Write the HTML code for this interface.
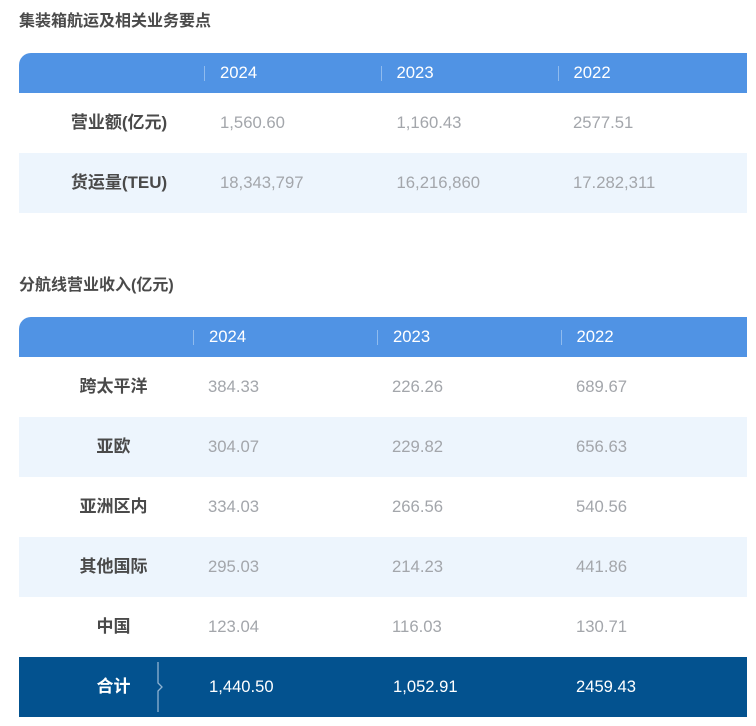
<!DOCTYPE html>
<html lang="zh">
<head>
<meta charset="utf-8">
<style>
html,body{margin:0;padding:0;background:#fff;width:756px;height:726px;overflow:hidden}
body{position:relative;font-family:"Liberation Sans","Noto Sans CJK SC",sans-serif}
.t,.h,.l,.v,.w,.s{position:absolute;white-space:nowrap}
.t{left:19px;font-size:16px;font-weight:bold;color:#4a4a4a;line-height:20px;margin-top:1px}
.bar{position:absolute;left:19px;width:728px}
.head{background:#5093e4;height:40px;border-radius:12px 0 0 0}
.alt{background:#edf5fd;height:60px}
.total{background:#03528f;height:60px}
.h{color:#fff;font-size:16.7px;line-height:20px;margin-top:1px}
.s{width:1px;height:15px;background:#8fbbee}
.l{font-size:17px;font-weight:bold;color:#4a4a4a;line-height:20px;text-align:center}
.v{font-size:16.7px;color:#a3a6ab;line-height:20px}
.w{font-size:16.6px;color:#fff;line-height:20px}
</style>
</head>
<body>
<div class="t" style="top:11px">集装箱航运及相关业务要点</div>
<div class="bar head" style="top:53px"></div>
<div class="s" style="left:204px;top:66px"></div><div class="h" style="left:220px;top:62px">2024</div>
<div class="s" style="left:381px;top:66px"></div><div class="h" style="left:396.5px;top:62px">2023</div>
<div class="s" style="left:558px;top:66px"></div><div class="h" style="left:573.5px;top:62px">2022</div>
<div class="l" style="left:19px;width:200px;top:113px">营业额(亿元)</div>
<div class="v" style="left:220px;top:113px">1,560.60</div><div class="v" style="left:396.5px;top:113px">1,160.43</div><div class="v" style="left:573px;top:113px">2577.51</div>
<div class="bar alt" style="top:153px"></div>
<div class="l" style="left:19px;width:200px;top:173px">货运量(TEU)</div>
<div class="v" style="left:220px;top:173px">18,343,797</div><div class="v" style="left:396.5px;top:173px">16,216,860</div><div class="v" style="left:573px;top:173px">17.282,311</div>

<div class="t" style="top:275px">分航线营业收入(亿元)</div>
<div class="bar head" style="top:317px"></div>
<div class="s" style="left:193px;top:330px"></div><div class="h" style="left:209px;top:326px">2024</div>
<div class="s" style="left:377px;top:330px"></div><div class="h" style="left:393px;top:326px">2023</div>
<div class="s" style="left:561px;top:330px"></div><div class="h" style="left:576.5px;top:326px">2022</div>

<div class="l" style="left:19px;width:189px;top:377px">跨太平洋</div>
<div class="v" style="left:208px;top:377px">384.33</div><div class="v" style="left:392px;top:377px">226.26</div><div class="v" style="left:576px;top:377px">689.67</div>

<div class="bar alt" style="top:417px"></div>
<div class="l" style="left:19px;width:189px;top:437px">亚欧</div>
<div class="v" style="left:208px;top:437px">304.07</div><div class="v" style="left:392px;top:437px">229.82</div><div class="v" style="left:576px;top:437px">656.63</div>

<div class="l" style="left:19px;width:189px;top:497px">亚洲区内</div>
<div class="v" style="left:208px;top:497px">334.03</div><div class="v" style="left:392px;top:497px">266.56</div><div class="v" style="left:576px;top:497px">540.56</div>

<div class="bar alt" style="top:537px"></div>
<div class="l" style="left:19px;width:189px;top:557px">其他国际</div>
<div class="v" style="left:208px;top:557px">295.03</div><div class="v" style="left:392px;top:557px">214.23</div><div class="v" style="left:576px;top:557px">441.86</div>

<div class="l" style="left:19px;width:189px;top:617px">中国</div>
<div class="v" style="left:208px;top:617px">123.04</div><div class="v" style="left:392px;top:617px">116.03</div><div class="v" style="left:576px;top:617px">130.71</div>

<div class="bar total" style="top:657px"></div>
<div class="l" style="left:19px;width:189px;top:677px;color:#fff">合计</div>
<svg style="position:absolute;left:150px;top:660px" width="16" height="54" viewBox="0 0 16 54"><path d="M8 2V23L12 27L8 31V52" fill="none" stroke="#8fb3d2" stroke-width="1.3"/></svg>
<div class="w" style="left:209px;top:677px">1,440.50</div><div class="w" style="left:393px;top:677px">1,052.91</div><div class="w" style="left:576px;top:677px">2459.43</div>
</body>
</html>
